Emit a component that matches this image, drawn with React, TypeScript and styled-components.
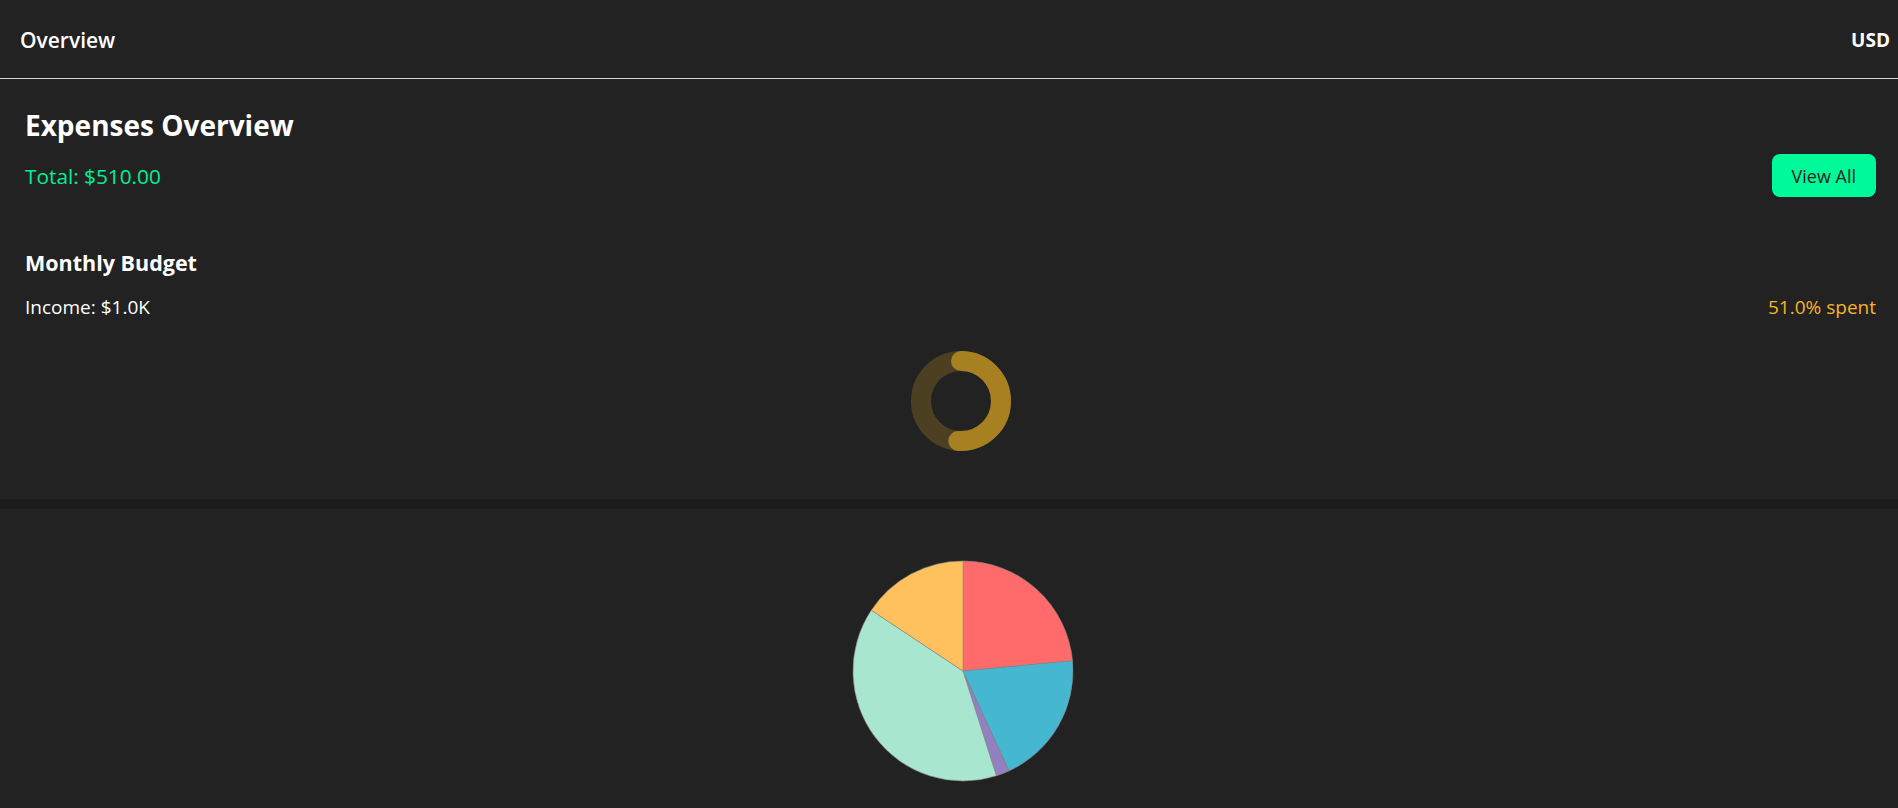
import React from "react";
import styled, { createGlobalStyle } from "styled-components";

const GlobalStyle = createGlobalStyle`
  body {
    margin: 0;
    background: #1b1b1b;
    font-family: "Open Sans", "Noto Sans", sans-serif;
    color: #fff;
  }
  * {
    box-sizing: border-box;
  }
`;

const Page = styled.div`
  display: flex;
  flex-direction: column;
  min-height: 100vh;
`;

const Header = styled.header`
  display: flex;
  justify-content: space-between;
  align-items: center;
  height: 79px;
  padding: 1px 8px 0 20px;
  background: #222;
  border-bottom: 1px solid #d4d4d4;
`;

const HeaderTitle = styled.div`
  font-size: 21px;
  line-height: 24px;
  font-weight: 600;
`;

const Currency = styled.div`
  font-size: 19px;
  line-height: 24px;
  font-weight: 700;
`;

const Main = styled.main`
  display: flex;
  flex-direction: column;
  gap: 10px;
`;

const Card = styled.section`
  background: #222;
  padding: 29px 22px 48px 25px;
`;

const Title = styled.h2`
  margin: 0;
  font-size: 28px;
  line-height: 34px;
  font-weight: 700;
`;

const Row = styled.div<{ $mt: number }>`
  display: flex;
  justify-content: space-between;
  align-items: center;
  margin-top: ${(p) => p.$mt}px;
`;

const Total = styled.span`
  font-size: 20.8px;
  line-height: 24px;
  color: #00f094;
`;

const Button = styled.button`
  height: 43px;
  padding: 0 20px;
  border: none;
  border-radius: 8px;
  background: #00fa9a;
  color: #222;
  font-family: inherit;
  font-size: 18px;
  cursor: pointer;
`;

const SubTitle = styled.h3`
  margin: 53px 0 0;
  font-size: 21.5px;
  line-height: 25px;
  font-weight: 700;
`;

const Income = styled.span`
  font-size: 19px;
  line-height: 22px;
`;

const Spent = styled.span`
  font-size: 19px;
  line-height: 22px;
  color: #f7b22a;
`;

const DonutWrap = styled.div`
  display: flex;
  justify-content: center;
  margin-top: 33px;
  padding-left: 20px;
`;

const ChartCard = styled.section`
  background: #222;
  padding: 12px 0 40px 28px;
  display: flex;
  justify-content: center;
`;

const expenses = [
  { name: "Food", amount: 120, color: "#ff6b6b" },
  { name: "Transport", amount: 100, color: "#45b7d1" },
  { name: "Other", amount: 10, color: "#9280c0" },
  { name: "Housing", amount: 200, color: "#a8e6cf" },
  { name: "Fun", amount: 80, color: "#ffc15e" },
];

const BudgetRing = ({ percent }: { percent: number }) => {
  const r = 40;
  const c = 2 * Math.PI * r;
  return (
    <svg width={100} height={100} viewBox="0 0 100 100">
      <circle cx={50} cy={50} r={r} fill="none" stroke="#4d4022" strokeWidth={20} />
      <circle
        cx={50}
        cy={50}
        r={r}
        fill="none"
        stroke="#a68021"
        strokeWidth={20}
        strokeLinecap="round"
        strokeDasharray={`${(percent / 100) * c} ${c}`}
        transform="rotate(-90 50 50)"
      />
    </svg>
  );
};

const point = (cx: number, cy: number, r: number, deg: number) => {
  const a = ((deg - 90) * Math.PI) / 180;
  return [cx + r * Math.cos(a), cy + r * Math.sin(a)];
};

const ExpensePie = () => {
  const total = expenses.reduce((s, e) => s + e.amount, 0);
  const cx = 150;
  const cy = 150;
  const r = 110;
  let start = 0;
  return (
    <svg width={300} height={300} viewBox="0 0 300 300">
      {expenses.map((e) => {
        const sweep = (e.amount / total) * 360;
        const [x1, y1] = point(cx, cy, r, start);
        const [x2, y2] = point(cx, cy, r, start + sweep);
        const large = sweep > 180 ? 1 : 0;
        start += sweep;
        return (
          <path
            key={e.name}
            d={`M${cx} ${cy} L${x1} ${y1} A${r} ${r} 0 ${large} 1 ${x2} ${y2} Z`}
            fill={e.color}
            stroke="#8a8a8a"
            strokeWidth={0.6}
          />
        );
      })}
    </svg>
  );
};

const App = () => {
  return (
    <Page>
      <GlobalStyle />
      <Header>
        <HeaderTitle>Overview</HeaderTitle>
        <Currency>USD</Currency>
      </Header>
      <Main>
        <Card>
          <Title>Expenses Overview</Title>
          <Row $mt={12}>
            <Total>Total: $510.00</Total>
            <Button>View All</Button>
          </Row>
          <SubTitle>Monthly Budget</SubTitle>
          <Row $mt={21}>
            <Income>Income: $1.0K</Income>
            <Spent>51.0% spent</Spent>
          </Row>
          <DonutWrap>
            <BudgetRing percent={51} />
          </DonutWrap>
        </Card>
        <ChartCard>
          <ExpensePie />
        </ChartCard>
      </Main>
    </Page>
  );
};

export default App;
